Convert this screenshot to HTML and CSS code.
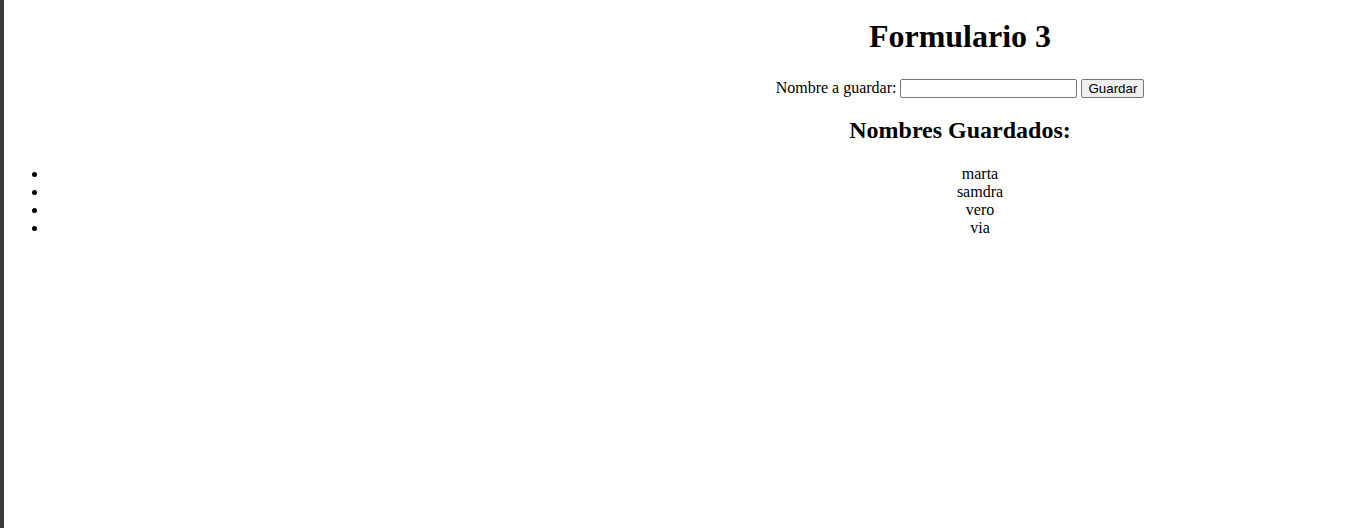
FILE: index.html
```html
<!DOCTYPE html>
<html lang="es">
<head>
<meta charset="utf-8">
<title>Formulario 3</title>
<link rel="stylesheet" href="styles.css">
</head>
<body>
<div class="frame-edge"></div>
<main class="page">
  <h1 class="title">Formulario 3</h1>
  <form class="save-form">
    <label for="nombre">Nombre a guardar:</label>
    <input type="text" id="nombre" class="name-input">
    <button type="button" class="save-btn">Guardar</button>
  </form>
  <h2 class="subtitle">Nombres Guardados:</h2>
  <ul class="name-list">
    <li>marta</li>
    <li>samdra</li>
    <li>vero</li>
    <li>via</li>
  </ul>
</main>
</body>
</html>
```
FILE: styles.css
```css
html {
  overflow: hidden;
  background: #fff;
}
body {
  margin: 0 8px 8px;
  width: 1904px;
  font-family: "Liberation Serif", "Times New Roman", serif;
  font-size: 16px;
  color: #000;
}
.page {
  text-align: center;
}
.title {
  font-size: 32px;
  font-weight: bold;
  margin: 18px 0 23.5px;
}
.save-form {
  margin: 0;
}
.name-input {
  font-family: "Liberation Sans", Arial, sans-serif;
  font-size: 13.333px;
  width: 171px;
  height: 15px;
  padding: 1px 2px;
  border: 1px solid #767676;
  border-radius: 2px;
  vertical-align: baseline;
}
.save-btn {
  font-family: "Liberation Sans", Arial, sans-serif;
  font-size: 13.333px;
  padding: 1px 6px;
  border: 1px solid #767676;
  border-radius: 2px;
  background: #efefef;
  color: #000;
}
.subtitle {
  font-size: 24px;
  font-weight: bold;
  margin: 19.92px 0 21px;
}
.name-list {
  margin: 16px 0;
  padding-left: 40px;
  list-style: disc;
}
.frame-edge {
  position: fixed;
  left: 0;
  top: 0;
  bottom: 0;
  width: 4px;
  background: #3a3a3a;
  z-index: 10;
}
```
